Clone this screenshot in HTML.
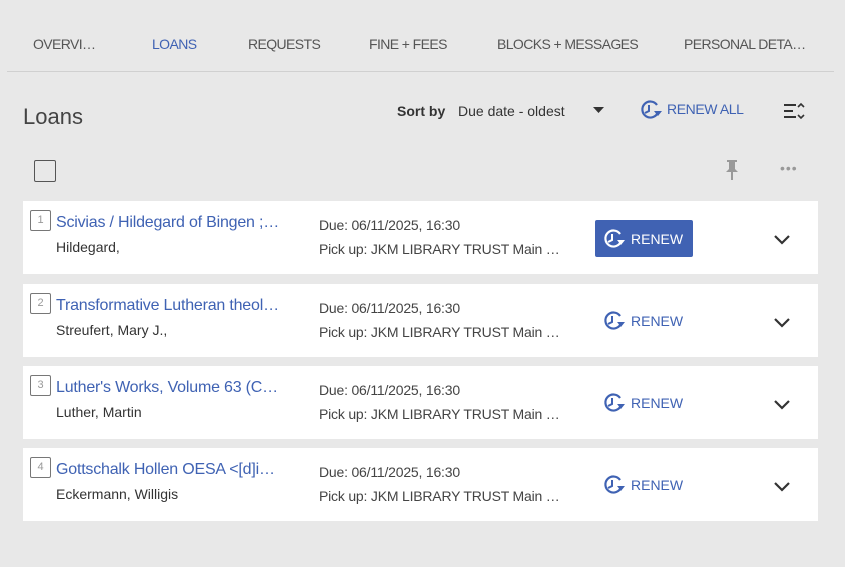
<!DOCTYPE html>
<html><head><style>
*{margin:0;padding:0;box-sizing:border-box}
body{width:845px;height:567px;background:#e8e8e8;font-family:"Liberation Sans",sans-serif;position:relative;overflow:hidden;color:#333}
.a{position:absolute;white-space:nowrap}
.tab{position:absolute;top:36px;font-size:14px;color:#555;letter-spacing:-0.6px;white-space:nowrap}
.row{position:absolute;left:23px;width:795px;height:73px;background:#fff}
.num{position:absolute;left:7px;top:9px;width:21px;height:21px;border:1px solid #777;border-radius:2px;font-size:11px;color:#999;text-align:center;line-height:19px}
.title{position:absolute;left:33px;top:13px;font-size:16px;color:#3f62b3;width:225px;overflow:hidden;text-overflow:ellipsis;white-space:nowrap;letter-spacing:-0.2px}
.auth{position:absolute;left:33px;top:38px;font-size:14px;color:#333;white-space:nowrap}
.due{position:absolute;left:296px;top:16px;font-size:14px;color:#444;letter-spacing:-0.2px;white-space:nowrap}
.pick{position:absolute;left:296px;top:40px;font-size:14px;color:#444;letter-spacing:-0.2px;white-space:nowrap}
.rn{position:absolute;left:579px;top:25px;font-size:14px;color:#3f62b3;display:flex;align-items:center;gap:5px}
.chev{position:absolute;left:750px;top:33px}
</style></head><body>
<div class="tab" style="left:33px">OVERVI…</div>
<div class="tab" style="left:152px;color:#3f62b3">LOANS</div>
<div class="tab" style="left:248px">REQUESTS</div>
<div class="tab" style="left:369px">FINE + FEES</div>
<div class="tab" style="left:497px">BLOCKS + MESSAGES</div>
<div class="tab" style="left:684px">PERSONAL DETA…</div>
<div class="a" style="left:7px;top:71px;width:827px;height:1px;background:#d0d0d0"></div>

<div class="a" style="left:23px;top:104px;font-size:22px;color:#444">Loans</div>
<div class="a" style="left:397px;top:103px;font-size:14px;font-weight:bold;color:#333">Sort by</div>
<div class="a" style="left:458px;top:103px;font-size:14px;color:#333">Due date - oldest</div>
<svg class="a" style="left:593px;top:106px" width="12" height="8"><path d="M0 1h11l-5.5 6z" fill="#333"/></svg>
<svg class="a" style="left:639px;top:98px" width="24" height="24" viewBox="0 0 24 24"><path d="M19 14A8 8 0 1 1 18 7" fill="none" stroke="#3f62b3" stroke-width="2.2"/><path d="M10 7v6l-4 2" fill="none" stroke="#3f62b3" stroke-width="2"/><path d="M15 13l4 5 4-5z" fill="#3f62b3"/></svg>
<div class="a" style="left:667px;top:101px;font-size:14px;color:#3f62b3;letter-spacing:-0.4px">RENEW ALL</div>
<svg class="a" style="left:783px;top:101px" width="24" height="22"><path d="M1 4h12M1 10h9M1 16h12" stroke="#333" stroke-width="2"/><path d="M15 6l3-3 3 3M15 14l3 3 3-3" stroke="#333" stroke-width="1.6" fill="none"/></svg>

<div class="a" style="left:34px;top:160px;width:22px;height:22px;border:1.5px solid #555;border-radius:2px"></div>
<svg class="a" style="left:724px;top:159px" width="16" height="22"><path d="M3 1h10v2h-2v7l3 3H2l3-3V3H3z" fill="#999"/><rect x="7" y="13" width="2" height="8" fill="#999"/></svg>
<div class="a" style="left:780px;top:160px;font-size:14px;color:#999;letter-spacing:1px">•••</div>

<div class="row" style="top:201px">
<div class="num">1</div><div class="title">Scivias / Hildegard of Bingen ; translated</div><div class="auth">Hildegard,</div>
<div class="due">Due: 06/11/2025, 16:30</div><div class="pick">Pick up: JKM LIBRARY TRUST Main …</div>
<div class="a" style="left:572px;top:19px;width:98px;height:37px;background:#4062b3;border-radius:2px;color:#fff;font-size:14px;display:flex;align-items:center;padding-left:7px;gap:5px"><svg width="24" height="24" viewBox="0 0 24 24"><path d="M19 14A8 8 0 1 1 18 7" fill="none" stroke="#fff" stroke-width="2.2"/><path d="M10 7v6l-4 2" fill="none" stroke="#fff" stroke-width="2"/><path d="M15 13l4 5 4-5z" fill="#fff"/></svg>RENEW</div>
<svg class="chev" width="18" height="12"><path d="M2 2l7 7 7-7" stroke="#333" stroke-width="2.2" fill="none"/></svg></div>

<div class="row" style="top:284px">
<div class="num">2</div><div class="title">Transformative Lutheran theologies</div><div class="auth">Streufert, Mary J.,</div>
<div class="due">Due: 06/11/2025, 16:30</div><div class="pick">Pick up: JKM LIBRARY TRUST Main …</div>
<div class="rn"><svg width="24" height="24" viewBox="0 0 24 24"><path d="M19 14A8 8 0 1 1 18 7" fill="none" stroke="#3f62b3" stroke-width="2.2"/><path d="M10 7v6l-4 2" fill="none" stroke="#3f62b3" stroke-width="2"/><path d="M15 13l4 5 4-5z" fill="#3f62b3"/></svg>RENEW</div>
<svg class="chev" width="18" height="12"><path d="M2 2l7 7 7-7" stroke="#333" stroke-width="2.2" fill="none"/></svg></div>

<div class="row" style="top:366px">
<div class="num">3</div><div class="title">Luther's Works, Volume 63 (Companion)</div><div class="auth">Luther, Martin</div>
<div class="due">Due: 06/11/2025, 16:30</div><div class="pick">Pick up: JKM LIBRARY TRUST Main …</div>
<div class="rn"><svg width="24" height="24" viewBox="0 0 24 24"><path d="M19 14A8 8 0 1 1 18 7" fill="none" stroke="#3f62b3" stroke-width="2.2"/><path d="M10 7v6l-4 2" fill="none" stroke="#3f62b3" stroke-width="2"/><path d="M15 13l4 5 4-5z" fill="#3f62b3"/></svg>RENEW</div>
<svg class="chev" width="18" height="12"><path d="M2 2l7 7 7-7" stroke="#333" stroke-width="2.2" fill="none"/></svg></div>

<div class="row" style="top:448px">
<div class="num">4</div><div class="title">Gottschalk Hollen OESA &lt;[d]ie Sakramente</div><div class="auth">Eckermann, Willigis</div>
<div class="due">Due: 06/11/2025, 16:30</div><div class="pick">Pick up: JKM LIBRARY TRUST Main …</div>
<div class="rn"><svg width="24" height="24" viewBox="0 0 24 24"><path d="M19 14A8 8 0 1 1 18 7" fill="none" stroke="#3f62b3" stroke-width="2.2"/><path d="M10 7v6l-4 2" fill="none" stroke="#3f62b3" stroke-width="2"/><path d="M15 13l4 5 4-5z" fill="#3f62b3"/></svg>RENEW</div>
<svg class="chev" width="18" height="12"><path d="M2 2l7 7 7-7" stroke="#333" stroke-width="2.2" fill="none"/></svg></div>
</body></html>
